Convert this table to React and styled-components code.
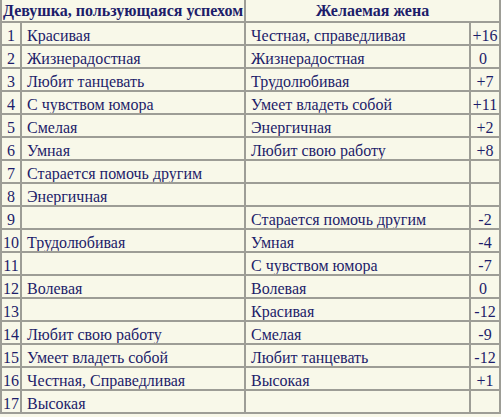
import React from "react";
import styled, { createGlobalStyle } from "styled-components";

const rows = [
  ["Красивая", "Честная, справедливая", "+16"],
  ["Жизнерадостная", "Жизнерадостная", "0"],
  ["Любит танцевать", "Трудолюбивая", "+7"],
  ["С чувством юмора", "Умеет владеть собой", "+11"],
  ["Смелая", "Энергичная", "+2"],
  ["Умная", "Любит свою работу", "+8"],
  ["Старается помочь другим", "", ""],
  ["Энергичная", "", ""],
  ["", "Старается помочь другим", "-2"],
  ["Трудолюбивая", "Умная", "-4"],
  ["", "С чувством юмора", "-7"],
  ["Волевая", "Волевая", "0"],
  ["", "Красивая", "-12"],
  ["Любит свою работу", "Смелая", "-9"],
  ["Умеет владеть собой", "Любит танцевать", "-12"],
  ["Честная, Справедливая", "Высокая", "+1"],
  ["Высокая", "", ""],
];

const Comparison = () => {
  return (
    <Table>
      <colgroup>
        <col style={{ width: 22 }} />
        <col style={{ width: 224 }} />
        <col style={{ width: 225 }} />
        <col style={{ width: 30 }} />
      </colgroup>
      <thead>
        <tr>
          <HeadCell colSpan={2} first>
            Девушка, пользующаяся успехом
          </HeadCell>
          <HeadCell colSpan={2}>Желаемая жена</HeadCell>
        </tr>
      </thead>
      <tbody>
        {rows.map(([girl, wife, score], i) => (
          <Row key={i}>
            <NumCell>{i + 1}</NumCell>
            <TextCell>{girl}</TextCell>
            <TextCell>{wife}</TextCell>
            <ScoreCell $narrow={score.length === 1}>{score}</ScoreCell>
          </Row>
        ))}
      </tbody>
    </Table>
  );
};

const GlobalStyle = createGlobalStyle`
  html, body {
    margin: 0;
    padding: 0;
    background: #f8f8e9;
  }
`;

const lineColor = "#9d9d96";

const Table = styled.table`
  table-layout: fixed;
  width: 501px;
  border-collapse: separate;
  border-spacing: 0;
  font-family: "Liberation Serif", "Times New Roman", serif;
  font-size: 16px;
  color: #1d1d6a;
  background: #f8f8e9;

  td, th {
    border-right: 2px solid ${lineColor};
    border-bottom: 2px solid ${lineColor};
    padding: 0;
    white-space: nowrap;
    overflow: hidden;
  }

  td {
    height: 16px;
    line-height: 16px;
    padding-top: 5px;
    vertical-align: top;
  }
`;

const HeadCell = styled.th`
  height: 21px;
  font-weight: bold;
  text-align: center;
  ${({ first }) => (first ? `border-left: 2px solid ${lineColor};` : "")}
`;

const Row = styled.tr``;

const NumCell = styled.td`
  text-align: center;
  border-left: 2px solid ${lineColor};
`;

const TextCell = styled.td`
  padding-left: 5px !important;
  text-align: left;
`;

const ScoreCell = styled.td`
  text-align: center;
  padding-right: ${({ $narrow }) => ($narrow ? "4px" : "0")} !important;
`;

const App = () => (
  <>
    <GlobalStyle />
    <Comparison />
  </>
);

export default App;
